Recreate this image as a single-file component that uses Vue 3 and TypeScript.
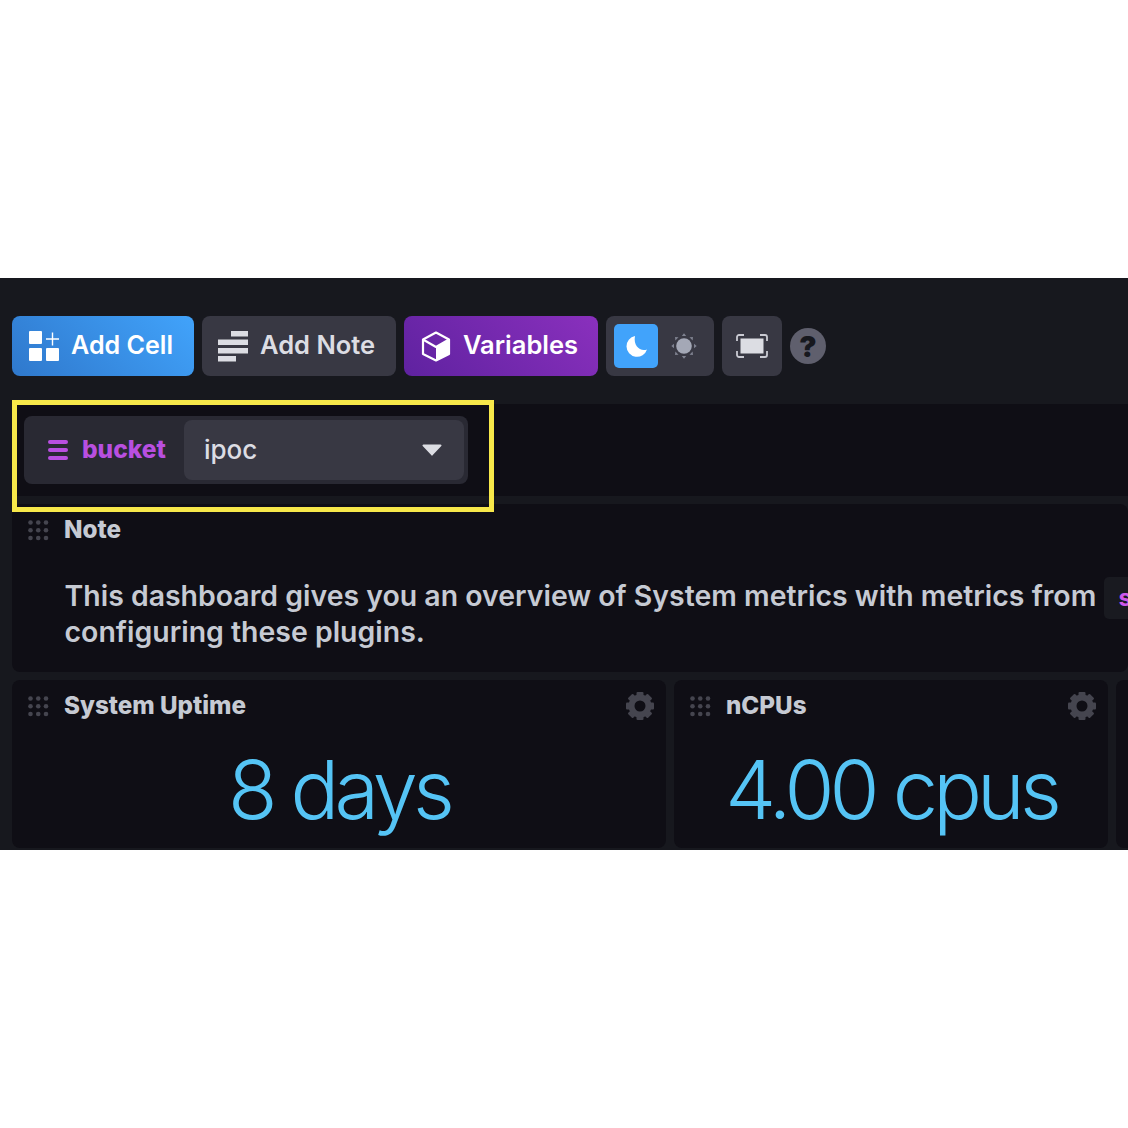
<script setup lang="ts">
const stats = [
  { title: "System Uptime", value: "8 days" },
  { title: "nCPUs", value: "4.00 cpus" },
]
const dots = [0, 1, 2].flatMap((y) => [0, 1, 2].map((x) => ({ cx: 2.5 + x * 7.75, cy: 2.5 + y * 7.75 })))
const rays = [0, 45, 90, 135, 180, 225, 270, 315]
</script>

<template>
  <div class="page">
    <main class="board">
      <header class="toolbar">
        <button class="btn btn-primary">
          <svg width="30" height="30" viewBox="0 0 30 30" fill="#fff">
            <rect x="0" y="0" width="13" height="13" rx="1" />
            <rect x="0" y="17" width="13" height="13" rx="1" />
            <rect x="17" y="17" width="13" height="13" rx="1" />
            <path d="M22.800 1.500h1.400v5.800H30v1.400h-5.800v5.800h-1.400V8.700H17V7.300h5.800z" />
          </svg>
          <span class="btn-label">Add Cell</span>
        </button>
        <button class="btn btn-dark">
          <svg width="30" height="31" viewBox="0 0 30 31" fill="#dcdde3">
            <rect x="13" y="0" width="17" height="5.500" />
            <rect x="0" y="8.500" width="30" height="5.500" />
            <rect x="0" y="17" width="30" height="5.500" />
            <rect x="0" y="25" width="18" height="5.500" />
          </svg>
          <span class="btn-label">Add Note</span>
        </button>
        <button class="btn btn-purple">
          <svg width="30" height="31" viewBox="0 0 30 31">
            <path d="M15 16v13.500L28 23V8.500z" fill="#fff" />
            <path d="M15 1.500 28 8.500V23l-13 6.500L2 23V8.500zM2 8.500 15 16l13-7.500" fill="none" stroke="#fff" stroke-width="2.200" stroke-linejoin="round" />
          </svg>
          <span class="btn-label">Variables</span>
        </button>
        <div class="theme-toggle">
          <span class="theme-on">
            <svg width="24" height="24" viewBox="0 0 24 24">
              <path d="M11 2A10.500 10.500 0 1 0 23 15.500C16.500 18 9 12 11 2z" fill="#fff" />
            </svg>
          </span>
          <span class="theme-off">
            <svg width="26" height="26" viewBox="0 0 26 26">
              <circle cx="13" cy="13" r="7.800" fill="#a4a8b6" />
              <path
                v-for="r in rays"
                :key="r"
                d="M10.800 3h4.400L13 .3z"
                fill="#7f8290"
                :transform="`rotate(${r} 13 13)`"
              />
            </svg>
          </span>
        </div>
        <button class="btn-square">
          <svg width="32" height="24" viewBox="0 0 32 24">
            <rect x="4.500" y="4.500" width="23" height="15" fill="#dcdde3" />
            <path d="M1 7V3a2 2 0 0 1 2-2h5M24 1h5a2 2 0 0 1 2 2v4M31 17v4a2 2 0 0 1-2 2h-5M8 23H3a2 2 0 0 1-2-2v-4" fill="none" stroke="#c9cad2" stroke-width="1.800" />
          </svg>
        </button>
        <span class="help">?</span>
      </header>

      <section class="variables">
        <div class="variable">
          <span class="variable-name">
            <svg width="20" height="20" viewBox="0 0 20 20" fill="#b84fe0">
              <rect x="0" y="0" width="20" height="4" rx="2" />
              <rect x="0" y="8" width="20" height="4" rx="2" />
              <rect x="0" y="16" width="20" height="4" rx="2" />
            </svg>
            <span class="variable-label">bucket</span>
          </span>
          <div class="variable-select">
            <span class="variable-label">ipoc</span>
            <svg width="20" height="12" viewBox="0 0 20 12">
              <path d="M1.500 0.500h17a1 1 0 0 1 .8 1.600l-8.500 9a1 1 0 0 1-1.600 0l-8.500-9a1 1 0 0 1 .8-1.600z" fill="#dcdde3" />
            </svg>
          </div>
        </div>
      </section>

      <article class="cell note-cell">
        <div class="cell-head">
          <svg class="grip" width="21" height="21" viewBox="0 0 21 21" fill="#45454f">
            <circle v-for="d in dots" :key="`${d.cx}-${d.cy}`" :cx="d.cx" :cy="d.cy" r="2.300" />
          </svg>
          <h3>Note</h3>
        </div>
        <p class="note-text">
          <span class="note-line">This dashboard gives you an overview of System metrics with metrics from <code>system</code></span>
          <span class="note-line">configuring these plugins.</span>
        </p>
      </article>

      <div class="stats">
        <article v-for="s in stats" :key="s.title" class="cell stat-cell">
          <div class="cell-head">
            <svg class="grip" width="21" height="21" viewBox="0 0 21 21" fill="#45454f">
              <circle v-for="d in dots" :key="`${d.cx}-${d.cy}`" :cx="d.cx" :cy="d.cy" r="2.300" />
            </svg>
            <h3>{{ s.title }}</h3>
            <svg class="gear" width="28" height="28" viewBox="0 0 28 28">
              <g fill="#45454f">
                <rect
                  v-for="r in rays"
                  :key="r"
                  x="10.500"
                  y="0"
                  width="7"
                  height="7"
                  rx="1"
                  :transform="`rotate(${r} 14 14)`"
                />
              </g>
              <circle cx="14" cy="14" r="8.500" fill="none" stroke="#45454f" stroke-width="6" />
            </svg>
          </div>
          <div class="stat-value">{{ s.value }}</div>
        </article>
        <article class="cell stat-cell"></article>
      </div>

      <div class="highlight"></div>
    </main>
  </div>
</template>

<style scoped>
.page {
  height: 1128px;
  padding-top: 278px;
  box-sizing: border-box;
  overflow: hidden;
  background: #fff;
  font-family: Inter, "Liberation Sans", sans-serif;
}
.board {
  position: relative;
  height: 572px;
  padding: 38px 0 0 12px;
  box-sizing: border-box;
  overflow: hidden;
  background: #17181e;
}
.highlight {
  position: absolute;
  top: 122px;
  left: 12px;
  box-sizing: border-box;
  width: 482px;
  height: 112px;
  border: 5px solid #f7e84a;
}
.toolbar {
  display: flex;
  align-items: center;
  gap: 8px;
  height: 60px;
}
.btn {
  display: flex;
  align-items: center;
  height: 60px;
  padding: 0;
  border: 0;
  border-radius: 8px;
  color: #fff;
  font-family: inherit;
  font-size: 25.500px;
  font-weight: 600;
  white-space: nowrap;
}
.btn-label {
  margin-bottom: 3px;
}
.btn-primary {
  width: 182px;
  gap: 12px;
  padding-left: 17px;
  background: linear-gradient(45deg, #2f78cc, #41a3fb);
  font-size: 25.100px;
}
.btn-dark {
  width: 194px;
  gap: 12px;
  padding-left: 16px;
  background: #383843;
  color: #dcdde3;
}
.btn-purple {
  width: 194px;
  gap: 12px;
  padding-left: 17px;
  background: linear-gradient(45deg, #5f22a0, #8a30bd);
}
.theme-toggle {
  display: flex;
  align-items: center;
  box-sizing: border-box;
  width: 108px;
  height: 60px;
  padding: 8px 0 8px 8px;
  border-radius: 8px;
  background: #383843;
}
.theme-on,
.theme-off {
  display: flex;
  flex: none;
  align-items: center;
  justify-content: center;
  width: 44px;
  height: 44px;
  border-radius: 5px;
}
.theme-on {
  background: #41a3fb;
}
.theme-off {
  width: 52px;
}
.btn-square {
  display: flex;
  align-items: center;
  justify-content: center;
  width: 60px;
  height: 60px;
  padding: 0;
  border: 0;
  border-radius: 8px;
  background: #383843;
}
.help {
  display: flex;
  align-items: center;
  justify-content: center;
  width: 36px;
  height: 36px;
  border-radius: 50%;
  background: #5f5f6d;
  color: #17181e;
  font-size: 29px;
  font-weight: 900;
}
.variables {
  height: 92px;
  margin-top: 28px;
  padding: 12px;
  box-sizing: border-box;
  border-radius: 8px 0 0 0;
  background: #0f0e15;
}
.variable {
  display: flex;
  align-items: center;
  box-sizing: border-box;
  width: 444px;
  height: 68px;
  padding: 4px;
  border-radius: 8px;
  background: #292933;
}
.variable-name {
  display: flex;
  flex: none;
  align-items: center;
  gap: 14px;
  width: 156px;
  padding-left: 20px;
  box-sizing: border-box;
  color: #b84fe0;
  font-size: 24.500px;
  font-weight: 800;
}
.variable-label {
  margin-bottom: 2px;
}
.variable-select {
  display: flex;
  align-items: center;
  justify-content: space-between;
  flex: 1;
  height: 60px;
  padding: 0 22px 0 20px;
  border-radius: 8px;
  background: #383843;
  color: #dcdde3;
  font-size: 26px;
  font-weight: 500;
}
.cell {
  box-sizing: border-box;
  border-radius: 8px;
  background: #0f0e15;
}
.note-cell {
  height: 168px;
  margin-top: 8px;
  overflow: hidden;
}
.cell-head {
  display: flex;
  align-items: center;
  height: 52px;
  padding: 0 12px 0 16px;
}
.grip {
  flex: none;
  margin-right: 15px;
}
.cell-head h3 {
  flex: 1;
  margin: 0;
  color: #c6cad3;
  font-size: 24.200px;
  font-weight: 800;
  line-height: 1;
}
.note-text {
  margin: 22px 0 0;
  padding-left: 52.500px;
  color: #c6cad3;
  font-size: 28.450px;
  font-weight: 600;
  line-height: 36px;
  white-space: nowrap;
}
.note-line {
  display: block;
  height: 36px;
}
.note-text code {
  position: relative;
  z-index: 1;
  display: inline-block;
  margin: -3px 0 -3px 1px;
  padding: 0 14px;
  border-radius: 5px;
  background: #191a20;
  color: #ce58eb;
  font-family: inherit;
  font-size: 24px;
  font-weight: 700;
  line-height: 42px;
}
.stats {
  display: grid;
  grid-template-columns: 654px 434px 200px;
  gap: 8px;
  margin-top: 8px;
}
.stat-cell {
  height: 168px;
}
.stat-value {
  margin-top: 12px;
  color: #55c4f5;
  font-size: 81px;
  font-weight: 300;
  letter-spacing: -0.06em;
  line-height: 92px;
  text-align: center;
  white-space: nowrap;
}
</style>

<style>
html,
body {
  margin: 0;
  background: #fff;
}
</style>
